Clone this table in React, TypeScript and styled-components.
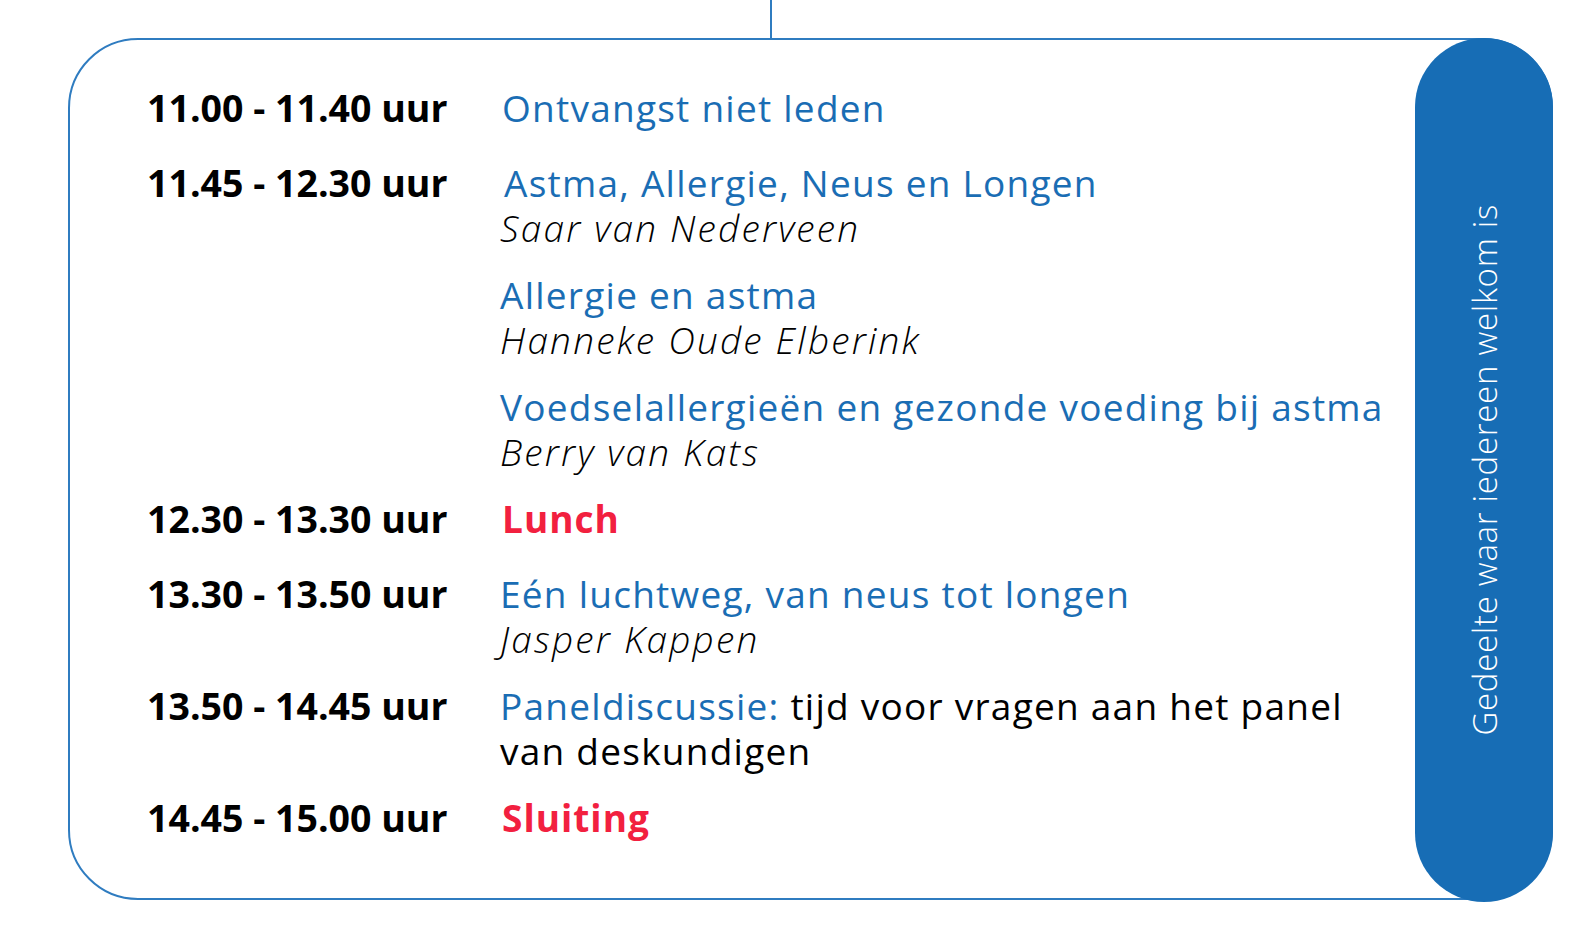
import React from "react";
import styled, { createGlobalStyle } from "styled-components";

const BLUE = "#1a6db4";
const LINE = "#2f7cc0";
const RED = "#f2203f";

const GlobalStyle = createGlobalStyle`
  html, body {
    margin: 0;
    padding: 0;
    background: #ffffff;
  }
  body {
    font-family: "Open Sans", "Noto Sans", sans-serif;
    color: #000;
  }
`;

const Page = styled.div`
  width: 1573px;
  height: 933px;
  overflow: hidden;
`;

const Connector = styled.div`
  height: 38px;
  display: flex;
`;

const Stem = styled.div`
  width: 2px;
  margin-left: 770px;
  background: ${LINE};
`;

const Card = styled.div`
  box-sizing: border-box;
  display: flex;
  margin-left: 68px;
  width: 1485px;
  height: 862px;
  border: 2px solid ${LINE};
  border-radius: 70px;
`;

const Schedule = styled.div`
  flex: 1;
  display: flex;
  flex-direction: column;
  gap: 22px;
  padding: 45px 0 0 77px;
`;

const Row = styled.div<{ $single?: boolean }>`
  display: grid;
  grid-template-columns: 353px 1fr;
  min-height: ${(p) => (p.$single ? "53px" : "0")};
`;

const Time = styled.div`
  font-weight: 700;
  font-size: 37.5px;
  line-height: 45px;
  white-space: nowrap;
`;

const Sessions = styled.div`
  display: flex;
  flex-direction: column;
  gap: 22px;
`;

const Session = styled.div`
  display: flex;
  flex-direction: column;
`;

const Title = styled.div<{ $accent?: boolean; $nudge?: number }>`
  font-size: 37px;
  line-height: 45px;
  font-weight: ${(p) => (p.$accent ? 700 : 400)};
  letter-spacing: ${(p) => (p.$accent ? "1px" : "1.25px")};
  color: ${(p) => (p.$accent ? RED : BLUE)};
  margin-left: ${(p) => p.$nudge ?? 0}px;
  white-space: nowrap;
`;

const Speaker = styled.div`
  font-size: 37px;
  line-height: 45px;
  font-style: italic;
  font-weight: 300;
  letter-spacing: 2.2px;
  white-space: nowrap;
`;

const Description = styled.div`
  font-size: 37px;
  line-height: 45px;
  letter-spacing: 1.25px;
  max-width: 860px;
  color: #000;
`;

const Lead = styled.span`
  color: ${BLUE};
`;

const Pill = styled.div`
  flex: 0 0 138px;
  margin: -2px -2px -4px 0;
  border-radius: 69px;
  background: #176db5;
  display: flex;
  align-items: center;
  justify-content: center;
`;

const PillText = styled.div`
  writing-mode: vertical-rl;
  transform: rotate(180deg);
  color: #ffffff;
  font-size: 33px;
  font-weight: 300;
  letter-spacing: 0.7px;
  white-space: nowrap;
`;

type Item = { title: string; speaker?: string; nudge?: number };

const morning: Item[] = [
  { title: "Astma, Allergie, Neus en Longen", speaker: "Saar van Nederveen", nudge: 4 },
  { title: "Allergie en astma", speaker: "Hanneke Oude Elberink" },
  { title: "Voedselallergieën en gezonde voeding bij astma", speaker: "Berry van Kats" },
];

export default function App() {
  return (
    <Page>
      <GlobalStyle />
      <Connector>
        <Stem />
      </Connector>
      <Card>
        <Schedule>
          <Row $single>
            <Time>11.00 - 11.40 uur</Time>
            <Title $nudge={2}>Ontvangst niet leden</Title>
          </Row>
          <Row>
            <Time>11.45 - 12.30 uur</Time>
            <Sessions>
              {morning.map((s) => (
                <Session key={s.title}>
                  <Title $nudge={s.nudge}>{s.title}</Title>
                  <Speaker>{s.speaker}</Speaker>
                </Session>
              ))}
            </Sessions>
          </Row>
          <Row $single>
            <Time>12.30 - 13.30 uur</Time>
            <Title $accent $nudge={2}>Lunch</Title>
          </Row>
          <Row>
            <Time>13.30 - 13.50 uur</Time>
            <Session>
              <Title>Eén luchtweg, van neus tot longen</Title>
              <Speaker>Jasper Kappen</Speaker>
            </Session>
          </Row>
          <Row>
            <Time>13.50 - 14.45 uur</Time>
            <Description>
              <Lead>Paneldiscussie:</Lead> tijd voor vragen aan het panel van deskundigen
            </Description>
          </Row>
          <Row>
            <Time>14.45 - 15.00 uur</Time>
            <Title $accent $nudge={2}>Sluiting</Title>
          </Row>
        </Schedule>
        <Pill>
          <PillText>Gedeelte waar iedereen welkom is</PillText>
        </Pill>
      </Card>
    </Page>
  );
}
